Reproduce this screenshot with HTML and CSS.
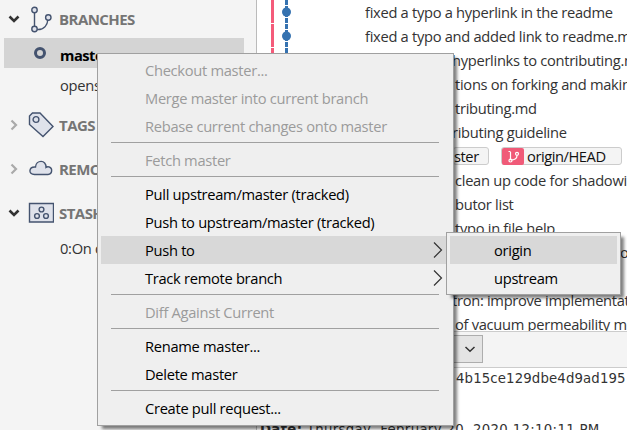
FILE: index.html
```
<!DOCTYPE html>
<html lang="en">
<head>
<meta charset="utf-8">
<title>Repository</title>
<link rel="stylesheet" href="styles.css">
</head>
<body>
<div class="app">
  <aside class="sidebar">
    <div class="section">
      <svg class="chev" viewBox="0 0 12 12"><path d="M1.500 3.500 6 8l4.500-4.500" class="open"/></svg>
      <svg class="icon" viewBox="0 0 26 28"><path d="M6.500 7v16M20 14c-.5 6-4 11-11 10.500" class="line"/><circle cx="6.500" cy="5" r="2.700" class="shape"/><circle cx="6.500" cy="24" r="2.700" class="shape"/><circle cx="20.300" cy="12.500" r="2.700" class="shape"/></svg>
      <span>BRANCHES</span>
    </div>
    <div class="branch selected"><i class="ring"></i><span>master</span></div>
    <div class="branch">opensource</div>
    <div class="section tags">
      <svg class="chev" viewBox="0 0 12 12"><path d="M3.500 1.500 8 6l-4.500 4.500" class="shut"/></svg>
      <svg class="icon" viewBox="0 0 26 28"><path d="M1.500 5 4.500 2h7.500L25 15.500 15 25.500 1.500 13.500z" class="shape"/><circle cx="8" cy="8.500" r="2.900" class="shape"/></svg>
      <span>TAGS</span>
    </div>
    <div class="section">
      <svg class="chev" viewBox="0 0 12 12"><path d="M3.500 1.500 8 6l-4.500 4.500" class="shut"/></svg>
      <svg class="icon" viewBox="0 0 26 28"><path d="M6.500 19.500h13.500a3.900 3.900 0 0 0 .6-7.700c-1-.3-2 .1-2.600.5C18.500 4.500 8 4.500 7.500 12c-7-.5-7.500 7.500-1 7.500z" class="shape"/></svg>
      <span>REMOTES</span>
    </div>
    <div class="section">
      <svg class="chev" viewBox="0 0 12 12"><path d="M1.500 3.500 6 8l4.500-4.500" class="open"/></svg>
      <svg class="icon" viewBox="0 0 26 28"><path d="M1.500 4.500h24v18.500h-24z" class="shape"/><circle cx="13.500" cy="10.500" r="2.400" class="shape"/><circle cx="9" cy="17" r="2.400" class="shape"/><circle cx="18" cy="17" r="2.400" class="shape"/></svg>
      <span>STASHES</span>
    </div>
    <div class="branch stash">0:On develop</div>
  </aside>
  <main class="main">
    <div class="log">
      <svg class="graph" viewBox="0 0 30 331"><path d="M5.500 0v331" class="pink"/><path d="M19.500 0v331" class="blue"/><path d="M4 23.500h18M4 47.500h18M18 5.500h3M18 17.500h3M18 29.500h3M18 41.500h3" class="tick"/><circle cx="19.500" cy="12" r="4.500"/><circle cx="19.500" cy="36" r="4.500"/></svg>
      <div class="commits">
        <p>fixed a typo a hyperlink in the readme</p>
        <p>fixed a typo and added link to readme.md</p>
        <p class="from">hyperlinks to contributing.md</p>
        <p class="from c">tions on forking and making</p>
        <p class="from c">tributing.md</p>
        <p class="from">ributing guideline</p>
        <div class="refs"><span class="ref first">ster</span><span class="ref"><b class="remote"><svg viewBox="0 0 22 16"><path d="M8.500 4v8M15 7.500c0 3-3 4.500-6.500 4.500M6.500 3.500h2"/><circle cx="8.500" cy="12.500" r="1.500"/><circle cx="15" cy="5.800" r="1.500"/></svg></b>origin/HEAD</span></div>
        <p class="from c">clean up code for shadowing</p>
        <p class="from c">butor list</p>
        <p class="from c">typo in file help</p>
        <p class="edge">o</p>
        <p></p>
        <p class="from">tron: improve implementation</p>
        <p class="from c">of vacuum permeability models</p>
      </div>
    </div>
    <div class="bar"><div class="select"><svg viewBox="0 0 12 12"><path d="M1.500 4 6 8.300 10.500 4"/></svg></div></div>
    <div class="details">
      <p class="hash">4b15ce129dbe4d9ad195</p>
      <p class="date"><b>Date:</b> Thursday, February 20, 2020 12:10:11 PM</p>
    </div>
  </main>
</div>
<nav class="menu">
  <div class="item off">Checkout master...</div>
  <div class="item off">Merge master into current branch</div>
  <div class="item off">Rebase current changes onto master</div>
  <hr>
  <div class="item off">Fetch master</div>
  <hr>
  <div class="item">Pull upstream/master (tracked)</div>
  <div class="item">Push to upstream/master (tracked)</div>
  <div class="item hot">Push to<svg viewBox="0 0 10 18"><path d="M1 1.500 8.500 9 1 16.500"/></svg></div>
  <div class="item">Track remote branch<svg viewBox="0 0 10 18"><path d="M1 1.500 8.500 9 1 16.500"/></svg></div>
  <hr>
  <div class="item off">Diff Against Current</div>
  <hr>
  <div class="item">Rename master...</div>
  <div class="item">Delete master</div>
  <hr>
  <div class="item">Create pull request...</div>
</nav>
<nav class="menu sub">
  <div class="item hot">origin</div>
  <div class="item">upstream</div>
</nav>
</body>
</html>
```
FILE: styles.css
```
* { box-sizing: border-box; }
body { margin: 0; width: 627px; height: 430px; overflow: hidden; font: 14.700px/24px "Open Sans", "Noto Sans", sans-serif; letter-spacing: -0.3px; color: #333; background: #fff; }
p { margin: 0; }
.app { display: flex; height: 430px; }
.sidebar { flex: none; width: 257px; background: #f4f4f4; border-right: 1px solid #bbb; }
.section { display: flex; align-items: center; height: 44px; padding-left: 8px; font-size: 15px; font-weight: 700; color: #757575; letter-spacing: -0.55px; }
.section:first-child { height: 38px; }
.chev { width: 12px; height: 12px; margin-right: 8px; }
.chev path { fill: none; stroke-width: 2.6; }
.chev .open { stroke: #333; }
.chev .shut { stroke: #aaa; stroke-width: 2.2; }
.icon { width: 26px; height: 28px; margin-right: 5px; }
.icon .shape { fill: #dfe2eb; stroke: #44536f; stroke-width: 1.4; }
.icon .line { fill: none; stroke: #44536f; stroke-width: 1.4; }
.branch { height: 30px; line-height: 34px; padding-left: 60px; }
.selected { display: flex; width: 240px; margin-left: 4px; padding-left: 30px; background: #d4d4d4; color: #000; font-weight: 700; letter-spacing: -0.5px; }
.ring { width: 12px; height: 12px; margin: 9px 14px 0 0; border: 3px solid #44536f; border-radius: 50%; }
.tags { margin-top: 5px; }
.stash { line-height: 27px; }
.main { flex: 1; min-width: 0; display: flex; flex-direction: column; }
.log { display: flex; height: 331px; padding-left: 10px; overflow: hidden; }
.graph { flex: none; width: 30px; height: 331px; }
.graph path { fill: none; stroke-width: 3; }
.graph .pink { stroke: #f45b7a; }
.graph .blue { stroke: #3572b0; }
.graph .tick { stroke: #fff; stroke-width: 1; }
.graph circle { fill: #3572b0; }
.commits { margin-left: 68px; width: 262px; overflow: hidden; white-space: nowrap; }
.commits p { height: 24px; line-height: 25px; }
.commits .from { padding-left: 87px; }
.commits .c { padding-left: 90px; }
.commits .edge { padding-left: 255px; }
.refs { display: flex; align-items: center; height: 24px; padding-left: 88px; gap: 12px; color: #111; }
.ref { display: flex; align-items: center; height: 18px; border: 1px solid #ccc; border-radius: 3px; background: #f4f4f4; padding-right: 15px; letter-spacing: -0.450px; }
.first { width: 36px; padding: 0; }
.remote { display: flex; width: 22px; height: 17px; margin-right: 3px; background: #f05a78; border-radius: 2px; }
.remote svg { width: 22px; height: 16px; fill: none; stroke: #fff; stroke-width: 1.2; }
.bar { height: 37px; padding: 3px 0 0 150px; background: #f4f4f4; border: solid #ccc; border-width: 1px 0; }
.select { display: flex; align-items: center; justify-content: flex-end; width: 76px; height: 28px; padding-right: 6px; border: 1px solid #adadad; background: #e4e4e4; }
.select svg { width: 12px; height: 12px; fill: none; stroke: #333; stroke-width: 1.5; }
.details { flex: 1; overflow: hidden; font: 13.300px/22px "DejaVu Sans", sans-serif; letter-spacing: 0; white-space: nowrap; }
.hash { padding-left: 199px; letter-spacing: 0.130px; }
.date { margin-top: 29px; padding-left: 3px; letter-spacing: 0.320px; }
.menu { position: absolute; left: 97px; top: 53px; width: 357px; height: 373px; padding: 2px 3px; border: 1px solid #a0a0a0; background: #efefef; box-shadow: 4px 4px 3px -1px rgba(0,0,0,.5); color: #000; white-space: nowrap; }
.item { display: flex; align-items: center; justify-content: space-between; height: 28px; padding: 0 7px 0 44px; }
.item svg { width: 10px; height: 18px; fill: none; stroke: #333; stroke-width: 1.2; }
.off { color: #9b9b9b; }
.hot { background: #d8d8d8; }
.menu hr { height: 1px; margin: 2px 11px 3px 10px; border: 0; background: #a0a0a0; }
.sub { left: 446px; top: 232px; width: 175px; height: 63px; padding: 3px; }
```
